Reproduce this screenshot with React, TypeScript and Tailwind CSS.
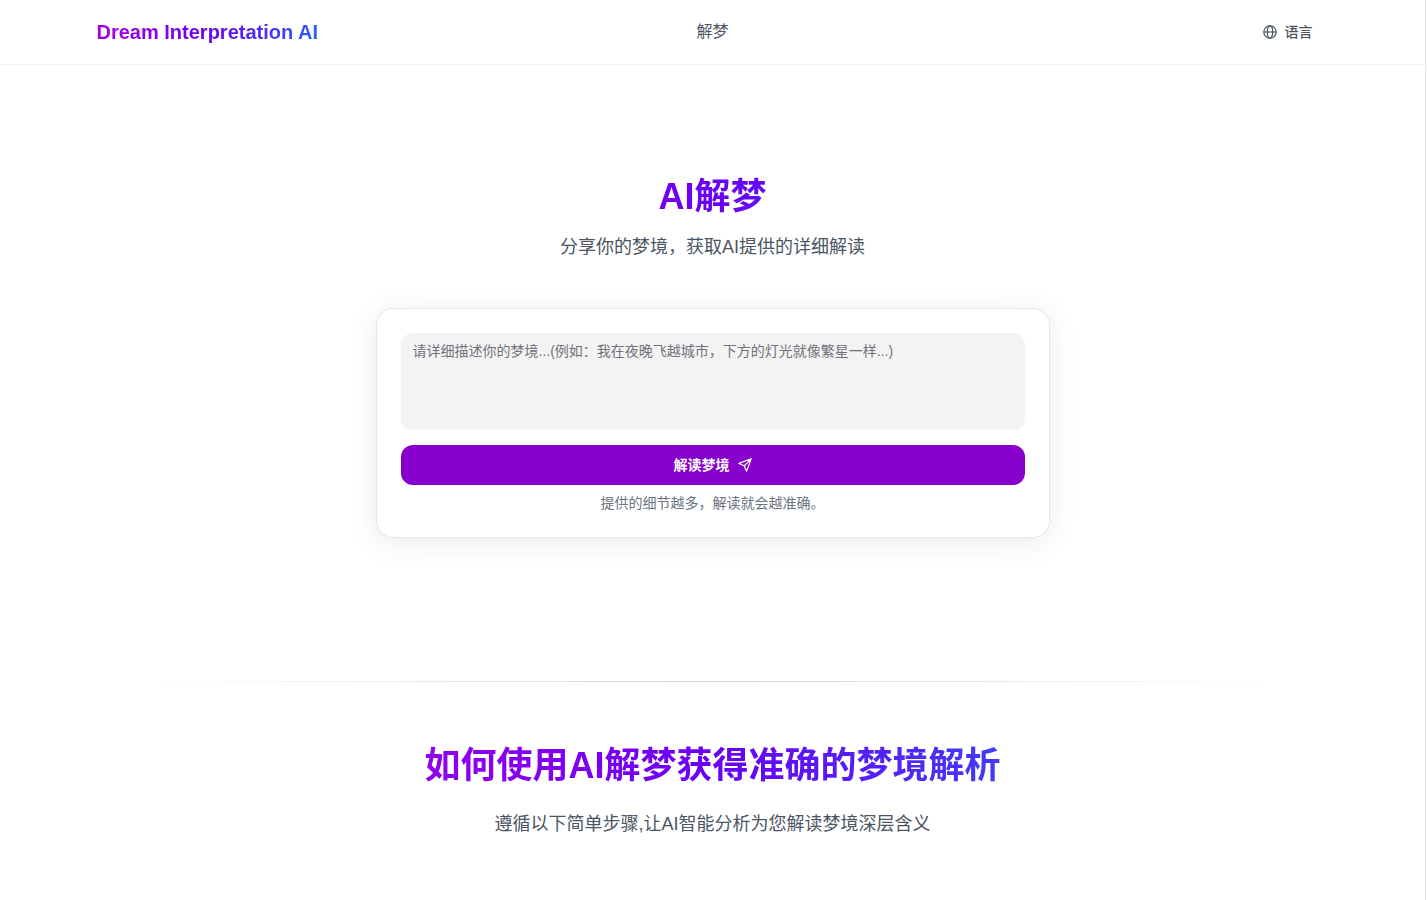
import { useState } from 'react';

const gradientText = 'bg-linear-to-r/srgb from-[#a800e8] via-[#6a00f4] to-[#2c5cf8] bg-clip-text text-transparent';

function GlobeIcon() {
  return (
    <svg width="14" height="14" viewBox="0 0 14 14" fill="none" stroke="currentColor" strokeWidth="1.2" aria-hidden="true">
      <circle cx="7" cy="7" r="6.2" />
      <ellipse cx="7" cy="7" rx="2.7" ry="6.2" />
      <path d="M.8 7h12.4" />
    </svg>
  );
}

function SendIcon() {
  return (
    <svg width="14" height="14" viewBox="0 0 14 14" fill="none" stroke="currentColor" strokeWidth="1.2" strokeLinejoin="round" aria-hidden="true">
      <path d="M13.2 .8 8.6 13.2 6.2 7.8 .8 5.4 13.2 .8ZM13.2 .8 6.2 7.8" />
    </svg>
  );
}

function Header() {
  return (
    <header className="border-b border-gray-100">
      <div className="mx-auto grid h-16 max-w-7xl grid-cols-[1fr_auto_1fr] items-center px-6">
        <a href="#" className={`justify-self-start text-xl font-bold ${gradientText}`}>
          Dream Interpretation AI
        </a>
        <nav>
          <a href="#interpret" className="text-base text-[#4b5563]">解梦</a>
        </nav>
        <button className="flex h-9 items-center gap-2 justify-self-end rounded-md px-4 text-sm font-medium text-[#4b5563]">
          <GlobeIcon />
          语言
        </button>
      </div>
    </header>
  );
}

function DreamForm() {
  const [dream, setDream] = useState('');

  return (
    <form
      onSubmit={(e) => e.preventDefault()}
      className="w-full rounded-2xl bg-white p-6 shadow-[0_4px_32px_rgba(0,0,0,0.09)] ring-1 ring-gray-200"
    >
      <textarea
        value={dream}
        onChange={(e) => setDream(e.target.value)}
        aria-label="梦境描述"
        placeholder="请详细描述你的梦境...(例如：我在夜晚飞越城市，下方的灯光就像繁星一样...)"
        className="block h-24 w-full resize-none rounded-xl bg-[#f3f3f3] px-3 py-2 text-sm shadow-xs outline-none placeholder:text-[#71717a]"
      />
      <button
        type="submit"
        className="mt-4 flex h-10 w-full items-center justify-center gap-2 rounded-xl bg-[#8800cc] text-sm font-bold text-white"
      >
        解读梦境
        <SendIcon />
      </button>
      <p className="mt-2 text-center text-sm text-[#6b7280]">提供的细节越多，解读就会越准确。</p>
    </form>
  );
}

export default function App() {
  return (
    <div
      lang="zh-CN"
      className="mr-px min-h-screen border-r border-gray-200 bg-white font-['Liberation_Sans','Noto_Sans_CJK_SC',sans-serif]"
    >
      <Header />
      <main>
        <section id="interpret" className="mx-auto flex max-w-2xl flex-col items-center pt-28 pb-36">
          <h1 className={`w-full text-center text-4xl font-bold ${gradientText}`}>AI解梦</h1>
          <p className="mt-4 mb-12 text-lg text-[#4b5563]">分享你的梦境，获取AI提供的详细解读</p>
          <DreamForm />
        </section>
        <div className="mx-auto h-px max-w-6xl bg-linear-to-r from-transparent via-gray-300 to-transparent" />
        <section className="px-6 py-16 text-center">
          <h2 className={`mx-auto max-w-4xl text-4xl font-bold ${gradientText}`}>
            如何使用AI解梦获得准确的梦境解析
          </h2>
          <p className="mt-6 text-lg text-[#4b5563]">遵循以下简单步骤,让AI智能分析为您解读梦境深层含义</p>
        </section>
      </main>
    </div>
  );
}
